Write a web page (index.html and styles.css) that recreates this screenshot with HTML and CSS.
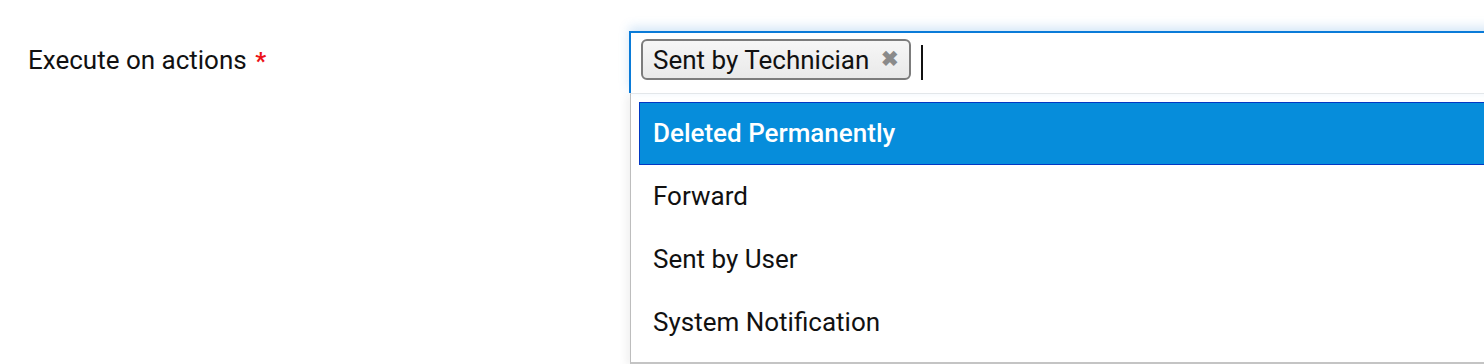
FILE: index.html
```html
<!DOCTYPE html>
<html lang="en">
<head>
  <meta charset="UTF-8">
  <title>Execute on actions</title>
  <link rel="stylesheet" href="styles.css">
</head>
<body>
  <div class="form-row">
    <label class="field-label">Execute on actions <span class="req">*</span></label>
    <div class="field">
      <div class="select-box">
        <span class="tag">Sent by Technician <span class="tag-x">&#x2716;</span></span>
        <span class="caret"></span>
      </div>
      <ul class="dropdown">
        <li class="option active">Deleted Permanently</li>
        <li class="option">Forward</li>
        <li class="option">Sent by User</li>
        <li class="option">System Notification</li>
      </ul>
    </div>
  </div>
</body>
</html>
```
FILE: styles.css
```css
html, body {
  margin: 0;
  padding: 0;
  background: #fff;
  overflow: hidden;
}
body {
  font-family: Roboto, 'Liberation Sans', Arial, sans-serif;
  font-size: 26px;
  color: #111;
}
.form-row {
  display: flex;
  align-items: flex-start;
  padding-top: 31px;
}
.field-label {
  width: 601px;
  padding-left: 28px;
  line-height: 58px;
  flex-shrink: 0;
}
.req {
  color: #ec1218;
  font-size: 24px;
  font-weight: bold;
  margin-left: 2px;
}
.field {
  flex: 1;
  margin-right: -40px;
}
.select-box {
  height: 62px;
  box-sizing: border-box;
  border-top: 2px solid #0a7bd8;
  border-left: 2px solid #0a7bd8;
  padding: 6px 10px;
  display: flex;
  align-items: flex-start;
  box-shadow: 0 -4px 10px rgba(60, 140, 220, 0.22);
  background: #fff;
  position: relative;
  z-index: 1;
}
.tag {
  display: inline-flex;
  align-items: center;
  height: 41px;
  box-sizing: border-box;
  border: 2px solid #7c7c7c;
  border-radius: 6px;
  background: linear-gradient(#f6f6f6, #e9e9e9);
  padding: 0 10px 0 10px;
  color: #111;
  white-space: nowrap;
}
.tag-x {
  color: #8a8a8a;
  font-size: 21px;
  font-weight: bold;
  margin-left: 12px;
  margin-bottom: 1px;
}
.caret {
  width: 2px;
  height: 35px;
  background: #111;
  margin: 6px 0 0 10px;
}
.dropdown {
  list-style: none;
  margin: 0;
  padding: 8px 0 8px 8px;
  border-left: 1px solid #bdbdbd;
  border-bottom: 2px solid #c4c4c4;
  border-top: 1px solid #ececec;
  margin-left: 1px;
  box-shadow: -4px 2px 8px rgba(0, 0, 0, 0.06);
  background: #fff;
}
.option {
  height: 63px;
  line-height: 63px;
  padding-left: 14px;
  box-sizing: border-box;
  color: #111;
}
.option.active {
  background: #068ddb;
  color: #fff;
  font-weight: 500;
  border-top: 1px solid #0238c4;
  border-bottom: 1px solid #0238c4;
  border-left: 1px solid #0238c4;
  line-height: 61px;
  padding-left: 13px;
}
```
